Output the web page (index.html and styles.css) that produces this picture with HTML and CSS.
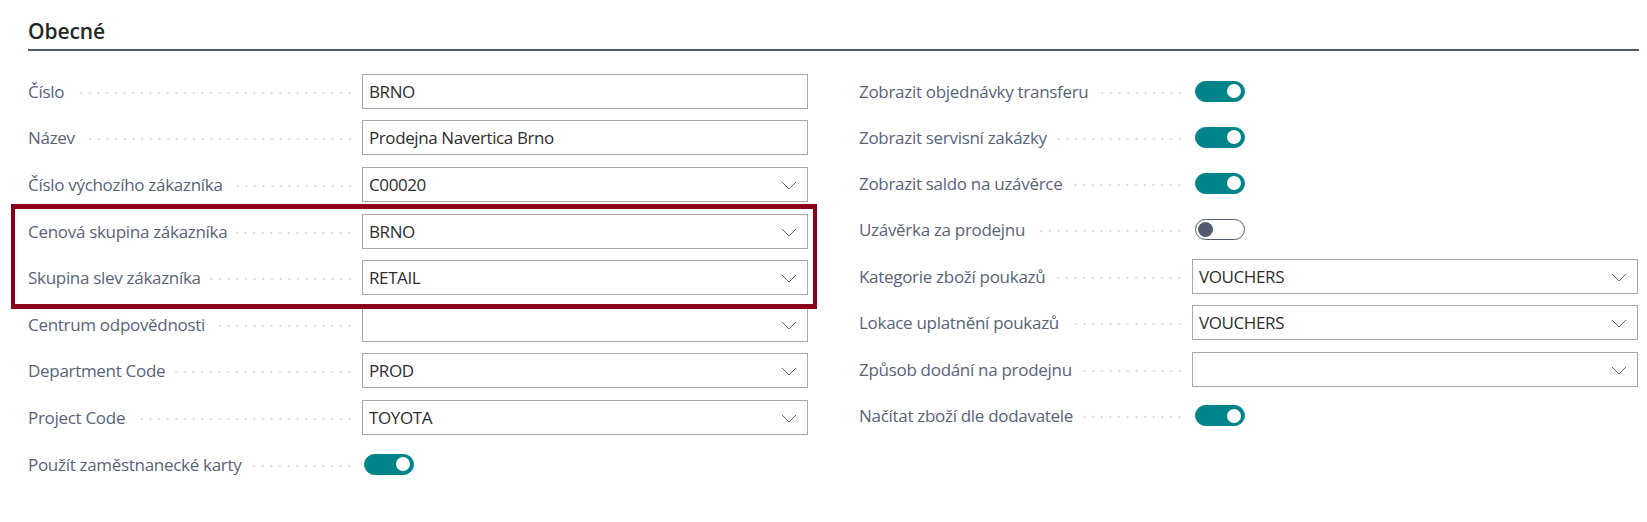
FILE: index.html
```html
<!DOCTYPE html>
<html lang="cs">
<head>
<meta charset="utf-8">
<title>Obecné</title>
<link rel="stylesheet" href="styles.css">
</head>
<body>
<div class="page">
  <section class="section">
    <h2 class="section-title">Obecné</h2>
    <div class="fields">
      <div class="col">
        <div class="row"><div class="caption"><span class="label">Číslo</span><span class="leader"></span></div><div class="input"><span class="value">BRNO</span></div></div>
        <div class="row"><div class="caption"><span class="label">Název</span><span class="leader"></span></div><div class="input"><span class="value">Prodejna Navertica Brno</span></div></div>
        <div class="row"><div class="caption"><span class="label">Číslo výchozího zákazníka</span><span class="leader"></span></div><div class="input"><span class="value">C00020</span><svg class="chev" viewBox="0 0 16 9" width="16" height="9"><path d="M1 1 L8 8 L15 1"/></svg></div></div>
        <div class="row"><div class="caption"><span class="label">Cenová skupina zákazníka</span><span class="leader"></span></div><div class="input"><span class="value">BRNO</span><svg class="chev" viewBox="0 0 16 9" width="16" height="9"><path d="M1 1 L8 8 L15 1"/></svg></div></div>
        <div class="row"><div class="caption"><span class="label">Skupina slev zákazníka</span><span class="leader"></span></div><div class="input"><span class="value">RETAIL</span><svg class="chev" viewBox="0 0 16 9" width="16" height="9"><path d="M1 1 L8 8 L15 1"/></svg></div></div>
        <div class="row"><div class="caption"><span class="label">Centrum odpovědnosti</span><span class="leader"></span></div><div class="input"><span class="value"></span><svg class="chev" viewBox="0 0 16 9" width="16" height="9"><path d="M1 1 L8 8 L15 1"/></svg></div></div>
        <div class="row"><div class="caption"><span class="label">Department Code</span><span class="leader"></span></div><div class="input"><span class="value">PROD</span><svg class="chev" viewBox="0 0 16 9" width="16" height="9"><path d="M1 1 L8 8 L15 1"/></svg></div></div>
        <div class="row"><div class="caption"><span class="label">Project Code</span><span class="leader"></span></div><div class="input"><span class="value">TOYOTA</span><svg class="chev" viewBox="0 0 16 9" width="16" height="9"><path d="M1 1 L8 8 L15 1"/></svg></div></div>
        <div class="row"><div class="caption"><span class="label">Použít zaměstnanecké karty</span><span class="leader"></span></div><div class="toggle on"><span class="knob"></span></div></div>
      </div>
      <div class="col">
        <div class="row trow"><div class="caption"><span class="label">Zobrazit objednávky transferu</span><span class="leader"></span></div><div class="toggle on"><span class="knob"></span></div></div>
        <div class="row trow"><div class="caption"><span class="label">Zobrazit servisní zakázky</span><span class="leader"></span></div><div class="toggle on"><span class="knob"></span></div></div>
        <div class="row trow"><div class="caption"><span class="label">Zobrazit saldo na uzávěrce</span><span class="leader"></span></div><div class="toggle on"><span class="knob"></span></div></div>
        <div class="row trow"><div class="caption"><span class="label">Uzávěrka za prodejnu</span><span class="leader"></span></div><div class="toggle off"><span class="knob"></span></div></div>
        <div class="row"><div class="caption"><span class="label">Kategorie zboží poukazů</span><span class="leader"></span></div><div class="input"><span class="value">VOUCHERS</span><svg class="chev" viewBox="0 0 16 9" width="16" height="9"><path d="M1 1 L8 8 L15 1"/></svg></div></div>
        <div class="row"><div class="caption"><span class="label">Lokace uplatnění poukazů</span><span class="leader"></span></div><div class="input"><span class="value">VOUCHERS</span><svg class="chev" viewBox="0 0 16 9" width="16" height="9"><path d="M1 1 L8 8 L15 1"/></svg></div></div>
        <div class="row"><div class="caption"><span class="label">Způsob dodání na prodejnu</span><span class="leader"></span></div><div class="input"><span class="value"></span><svg class="chev" viewBox="0 0 16 9" width="16" height="9"><path d="M1 1 L8 8 L15 1"/></svg></div></div>
        <div class="row trow"><div class="caption"><span class="label">Načítat zboží dle dodavatele</span><span class="leader"></span></div><div class="toggle on"><span class="knob"></span></div></div>
      </div>
    </div>
  </section>
  <div class="highlight"></div>
</div>
</body>
</html>
```

FILE: styles.css
```css
* { box-sizing: border-box; }
html, body {
  margin: 0;
  padding: 0;
  background: #ffffff;
}
body {
  font-family: "Open Sans", Roboto, "Liberation Sans", sans-serif;
  color: #212121;
}
.page {
  position: relative;
  width: 1647px;
  height: 522px;
  padding-left: 28px;
}
.section {
  width: 1611px;
}
.section-title {
  margin: 0;
  padding: 17px 0 3px 0;
  font-size: 21px;
  line-height: 29px;
  font-weight: 600;
  letter-spacing: -0.1px;
  color: #262626;
  border-bottom: 2px solid #505c6d;
}
.fields {
  display: grid;
  grid-template-columns: 780px 780px;
  column-gap: 51px;
  margin-top: 17px;
}
.col {
  display: flex;
  flex-direction: column;
}
.row {
  display: flex;
  align-items: center;
  height: 46.6px;
}
.row.trow {
  height: 46.2px;
}
.caption {
  display: flex;
  align-items: center;
  width: 334px;
  flex: none;
  height: 100%;
}
.col + .col .caption {
  width: 333px;
}
.label {
  font-size: 17px;
  line-height: 24px;
  letter-spacing: -0.3px;
  color: #58647a;
  white-space: nowrap;
  margin-top: 1px;
}
.leader {
  flex: 1;
  height: 4px;
  margin: 3px 8px 0 9px;
  background-image: radial-gradient(circle at center, #d2d2d2 0.8px, rgba(255,255,255,0) 1.2px);
  background-size: 8.67px 4px;
  background-repeat: repeat-x;
  background-position: right center;
}
.input {
  width: 446px;
  height: 35px;
  flex: none;
  display: flex;
  align-items: center;
  border: 1px solid #a8a8a8;
  padding: 1px 10px 0 6px;
  background: #fff;
}
.value {
  flex: 1;
  font-size: 17px;
  line-height: 24px;
  letter-spacing: -0.4px;
  color: #2e2e2e;
  white-space: nowrap;
}
.chev {
  flex: none;
  width: 16px;
  height: 9px;
  margin-top: 1px;
}
.chev path {
  fill: none;
  stroke: #6b6b6b;
  stroke-width: 1;
}
.toggle {
  width: 50px;
  height: 21px;
  flex: none;
  margin-left: 2px;
  border-radius: 11px;
  display: flex;
  align-items: center;
  padding: 0 3px;
}
.col + .col .toggle {
  margin-left: 3px;
}
.toggle.on {
  background: #008489;
  border: 1px solid #008489;
  justify-content: flex-end;
}
.toggle.off {
  background: #ffffff;
  border: 1px solid #505c6d;
  justify-content: flex-start;
  padding: 0 2px;
}
.knob {
  width: 14px;
  height: 14px;
  border-radius: 50%;
}
.toggle.on .knob {
  background: #ffffff;
}
.toggle.off .knob {
  width: 15px;
  height: 15px;
  background: #505c6d;
}
.highlight {
  position: absolute;
  left: 11px;
  top: 204px;
  width: 806px;
  height: 105px;
  border: 4px solid #8b0019;
  border-top-width: 5px;
  border-bottom-width: 5px;
  pointer-events: none;
}
```
